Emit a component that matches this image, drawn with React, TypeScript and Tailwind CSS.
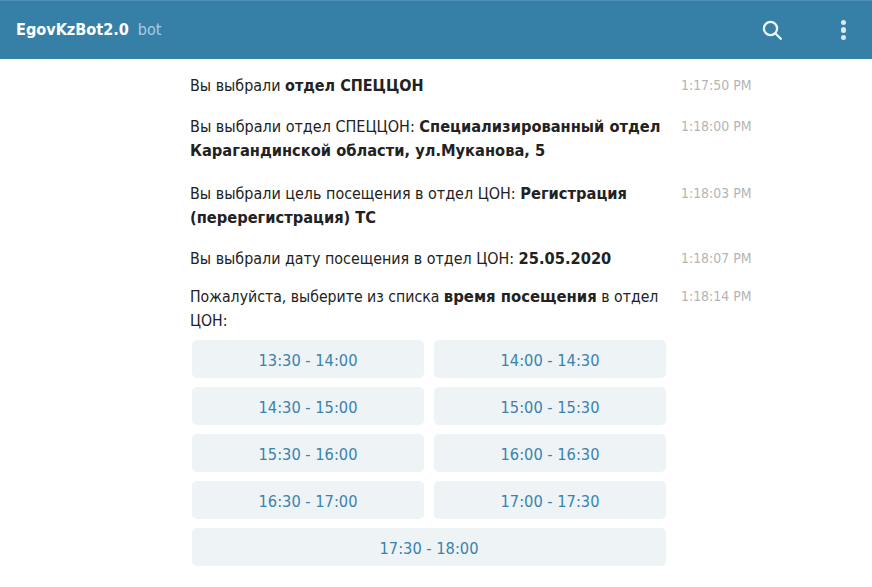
const messages = [
  { time: '1:17:50 PM', gap: 'mt-[14px]', size: 'text-[15.9px]', text: <>Вы выбрали <b className="text-[16px]">отдел СПЕЦЦОН</b></> },
  { time: '1:18:00 PM', gap: 'mt-[17px]', size: 'text-[16px]', text: <>Вы выбрали отдел СПЕЦЦОН: <b className="text-[16.3px]">Специализированный отдел Карагандинской области, ул.Муканова, 5</b></> },
  { time: '1:18:03 PM', gap: 'mt-[19px]', size: 'text-[15.95px]', text: <>Вы выбрали цель посещения в отдел ЦОН: <b className="text-[16.3px]">Регистрация (перерегистрация) ТС</b></> },
  { time: '1:18:07 PM', gap: 'mt-[17px]', size: 'text-[15.9px]', text: <>Вы выбрали дату посещения в отдел ЦОН: <b className="text-[16.3px]">25.05.2020</b></> },
  { time: '1:18:14 PM', gap: 'mt-[14px]', size: 'text-[15.7px]', text: <>Пожалуйста, выберите из списка <b className="text-[16.5px]">время посещения</b> в отдел ЦОН:</> },
];

const slots = [
  '13:30 - 14:00', '14:00 - 14:30',
  '14:30 - 15:00', '15:00 - 15:30',
  '15:30 - 16:00', '16:00 - 16:30',
  '16:30 - 17:00', '17:00 - 17:30',
];

export default function App() {
  return (
    <div className="w-[872px] h-[587px] overflow-hidden bg-white font-['DejaVu_Sans',sans-serif] [font-stretch:condensed] text-[#222222]">
      {/* Header */}
      <header className="h-[59px] bg-[#3680a8] border-t border-[#4d8fb3] flex items-center pl-4 pr-[26px]">
        <span className="text-[16.1px] font-bold text-white">EgovKzBot2.0</span>
        <span className="ml-[9px] text-[16px] text-[#a9cde2]">bot</span>
        <svg viewBox="0 0 20 20" className="ml-auto w-5 h-5 text-[#eef5f9]" fill="none" stroke="currentColor" strokeWidth="2.3" strokeLinecap="round">
          <circle cx="8.5" cy="8.5" r="6.6" />
          <path d="M13.5 13.5 L18.8 18.8" />
        </svg>
        <div className="ml-[59px] flex flex-col gap-[2px]">
          <span className="w-[5.5px] h-[5.5px] rounded-full bg-[#d9e8f0]" />
          <span className="w-[5.5px] h-[5.5px] rounded-full bg-[#d9e8f0]" />
          <span className="w-[5.5px] h-[5.5px] rounded-full bg-[#d9e8f0]" />
        </div>
      </header>

      {/* Messages */}
      <main className="pl-[190px]">
        {messages.map((m) => (
          <div key={m.time} className={`${m.gap} flex items-start`}>
            <p className={`${m.size} w-[480px] translate-y-px leading-6`}>{m.text}</p>
            <span className="ml-[11px] text-[13.9px] leading-6 text-[#b5b5b5]">{m.time}</span>
          </div>
        ))}

        {/* Inline keyboard */}
        <div className="mt-2 ml-[2px] w-[474px] grid grid-cols-2 gap-x-[10px] gap-y-[9px]">
          {slots.map((s) => (
            <button key={s} className="h-[38px] pt-[5px] rounded-[5px] bg-[#eef3f6] text-[16.3px] text-[#3a83ad]">
              {s}
            </button>
          ))}
          <button className="col-span-2 h-[38px] pt-[5px] rounded-[5px] bg-[#eef3f6] text-[16.3px] text-[#3a83ad]">
            17:30 - 18:00
          </button>
        </div>
      </main>
    </div>
  );
}
